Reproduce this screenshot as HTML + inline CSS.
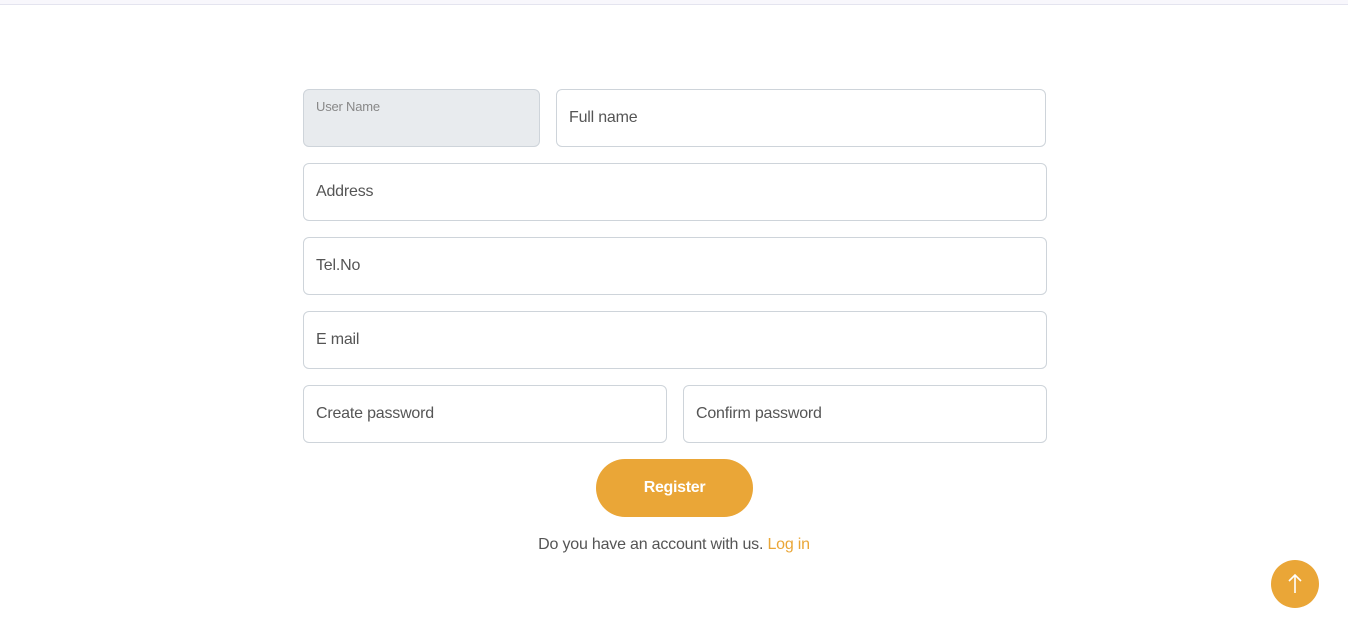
<!DOCTYPE html>
<html><head><style>
body{margin:0;width:1348px;height:637px;background:#fff;font-family:"Liberation Sans",sans-serif;position:relative;overflow:hidden}
.top{position:absolute;left:0;top:0;width:1348px;height:4px;background:#f8f7fc;border-bottom:1px solid #e4e4ef}
.f{position:absolute;box-sizing:border-box;border:1px solid #ced4da;border-radius:6px;height:58px;background:#fff;font-size:16px;color:#555;padding-left:12px;line-height:56px;letter-spacing:-0.2px}
.u{background:#e8ebee;font-size:13px;color:#888;line-height:1;padding-top:10px}
.btn{position:absolute;left:596px;top:459px;width:157px;height:58px;border-radius:29px;background:#eaa637;color:#fff;font-weight:bold;font-size:16px;text-align:center;line-height:58px;letter-spacing:-0.3px}
.t{position:absolute;top:536px;left:0;width:1348px;text-align:center;font-size:16px;color:#555;letter-spacing:-0.2px}
.t span{color:#eaa637}
.up{position:absolute;left:1271px;top:560px;width:48px;height:48px;border-radius:50%;background:#eaa637}
</style></head><body>
<div class="top"></div>
<div class="f u" style="left:303px;top:89px;width:237px">User Name</div>
<div class="f" style="left:556px;top:89px;width:490px">Full name</div>
<div class="f" style="left:303px;top:163px;width:744px">Address</div>
<div class="f" style="left:303px;top:237px;width:744px">Tel.No</div>
<div class="f" style="left:303px;top:311px;width:744px">E mail</div>
<div class="f" style="left:303px;top:385px;width:364px">Create password</div>
<div class="f" style="left:683px;top:385px;width:364px">Confirm password</div>
<div class="btn">Register</div>
<div class="t">Do you have an account with us. <span>Log in</span></div>
<div class="up"><svg width="48" height="48" viewBox="0 0 48 48"><path d="M24 33V15M18 21l6-6 6 6" stroke="#fff" stroke-width="1.6" fill="none"/></svg></div>
</body></html>
